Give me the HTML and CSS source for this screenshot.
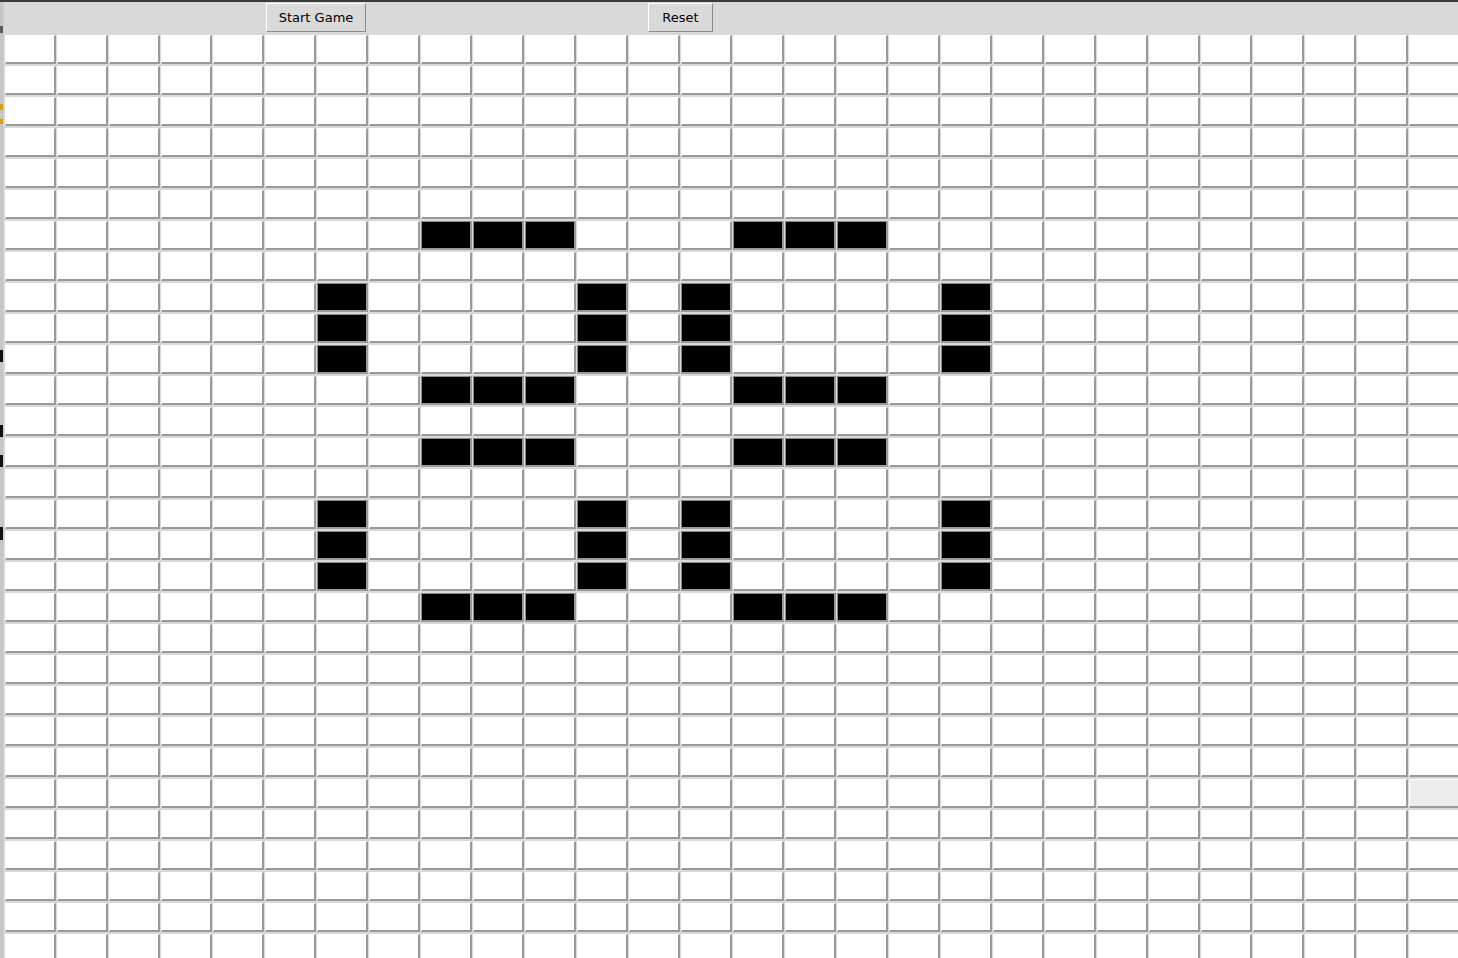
FILE: index.html
```html
<!DOCTYPE html>
<html lang="en">
<head>
<meta charset="utf-8">
<title>Game of Life</title>
<link rel="stylesheet" href="styles.css">
</head>
<body>
<div class="app">
  <div class="frame-top"></div>
  <div class="window">
    <div class="edge"></div>
    <div class="main">
      <div class="toolbar">
        <button class="btn btn-start" type="button">Start Game</button>
        <button class="btn btn-reset" type="button">Reset</button>
      </div>
      <div class="board" id="board"></div>
    </div>
  </div>
</div>
<script src="main.js"></script>
</body>
</html>
```

FILE: styles.css
```css
html, body {
  margin: 0;
  padding: 0;
  width: 1458px;
  height: 958px;
  overflow: hidden;
  background: #d9d9d9;
  font-family: "DejaVu Sans", "Liberation Sans", sans-serif;
}

.app {
  width: 1458px;
  height: 958px;
  display: flex;
  flex-direction: column;
  overflow: hidden;
}

.frame-top {
  height: 2px;
  flex: none;
  background: #383c38;
}

.window {
  flex: 1;
  display: flex;
  min-height: 0;
}

.edge {
  width: 3px;
  flex: none;
  background:
    linear-gradient(to bottom,
      #c6c6c6 0, #c6c6c6 24px, #5a5a5a 24px, #5a5a5a 31px, #c6c6c6 31px,
      #c6c6c6 102px, #d4a017 102px, #d4a017 108px, #c6c6c6 108px,
      #c6c6c6 117px, #d4a017 117px, #d4a017 122px, #c6c6c6 122px,
      #c6c6c6 348px, #111 348px, #111 360px, #c6c6c6 360px,
      #c6c6c6 423px, #111 423px, #111 435px, #c6c6c6 435px,
      #c6c6c6 453px, #111 453px, #111 465px, #c6c6c6 465px,
      #c6c6c6 525px, #111 525px, #111 538px, #c6c6c6 538px,
      #c6c6c6 100%);
  border-right: 1px solid #cfcfcf;
}

.main {
  flex: 1;
  display: flex;
  flex-direction: column;
  min-width: 0;
  overflow: hidden;
}

.toolbar {
  height: 32px;
  flex: none;
  display: flex;
  align-items: flex-start;
  padding: 1px 0 0 262px;
  gap: 282px;
  box-sizing: border-box;
  background: #d9d9d9;
}

.btn {
  height: 29px;
  margin: 0;
  padding: 0;
  box-sizing: border-box;
  font-family: "DejaVu Sans", "Liberation Sans", sans-serif;
  font-size: 13px;
  line-height: 26px;
  white-space: nowrap;
  text-align: center;
  color: #000;
  background: #d9d9d9;
  border-style: solid;
  border-width: 1px;
  border-color: #ffffff #8c8c8c #8c8c8c #ffffff;
  border-radius: 0;
  outline: none;
}

.btn-start {
  width: 100px;
}

.btn-reset {
  width: 65px;
}

.board {
  display: grid;
  grid-template-columns: repeat(28, 52px);
  grid-auto-rows: 31px;
  width: 1456px;
}

.cell {
  box-sizing: border-box;
  padding: 1px 0 1px 1px;
  background: #d9d9d9;
}

.face {
  display: block;
  box-sizing: border-box;
  height: 100%;
  background: #ffffff;
  border-style: solid;
  border-width: 1px 2px 2px 1px;
  border-color: #ffffff #9a9a9a #9a9a9a #ffffff;
}

.cell.alive .face {
  background: #000000;
  border-color: #8a8a8a #9a9a9a #9a9a9a #8a8a8a;
}

.cell.active .face {
  background: #ececec;
}
```

FILE: main.js
```js
(function () {
  var ROWS = 30;
  var COLS = 28;
  var alive = {};
  var hRows = [6, 11, 13, 18];
  var hCols = [8, 9, 10, 14, 15, 16];
  var vRows = [8, 9, 10, 15, 16, 17];
  var vCols = [6, 11, 13, 18];
  hRows.forEach(function (r) { hCols.forEach(function (c) { alive[r + "," + c] = true; }); });
  vRows.forEach(function (r) { vCols.forEach(function (c) { alive[r + "," + c] = true; }); });

  var board = document.getElementById("board");
  var frag = document.createDocumentFragment();
  for (var r = 0; r < ROWS; r++) {
    for (var c = 0; c < COLS; c++) {
      var cell = document.createElement("div");
      cell.className = "cell";
      if (alive[r + "," + c]) cell.className += " alive";
      if (r === 24 && c === 27) cell.className += " active";
      var face = document.createElement("span");
      face.className = "face";
      cell.appendChild(face);
      frag.appendChild(cell);
    }
  }
  board.appendChild(frag);
})();
```
